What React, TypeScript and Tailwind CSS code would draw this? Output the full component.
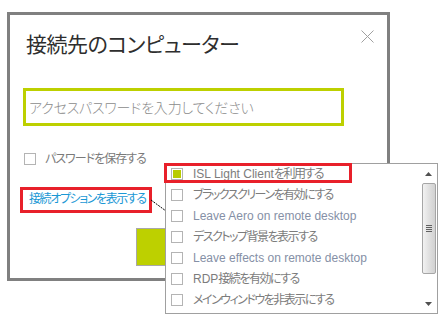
import React from "react";

const FONT = "[font-family:'Liberation_Sans','Noto_Sans_CJK_JP',sans-serif]";

function Check({ checked }: { checked?: boolean }) {
  return (
    <div className="w-[12px] h-[12px] border border-[#b4b4b4] bg-white flex items-center justify-center shrink-0">
      {checked && <div className="w-[8px] h-[8px] bg-[#b8cc00]" />}
    </div>
  );
}

function Mixed({ text }: { text: string }) {
  const parts = text.split(/([A-Za-z0-9 ]+)/).filter((p) => p.length > 0);
  return (
    <>
      {parts.map((p, i) =>
        /^[A-Za-z0-9 ]+$/.test(p) ? (
          <span key={i}>{p}</span>
        ) : (
          <span key={i} className="tracking-[-1.5px]">
            {p}
          </span>
        )
      )}
    </>
  );
}

const items: { text: string; en?: boolean; checked?: boolean }[] = [
  { text: "ISL Light Clientを利用する", checked: true },
  { text: "ブラックスクリーンを有効にする" },
  { text: "Leave Aero on remote desktop", en: true },
  { text: "デスクトップ背景を表示する" },
  { text: "Leave effects on remote desktop", en: true },
  { text: "RDP接続を有効にする" },
  { text: "メインウィンドウを非表示にする" },
];

export default function App() {
  return (
    <div className={`relative w-[443px] h-[322px] bg-white overflow-hidden ${FONT} [font-feature-settings:'palt']`}>
      <div className="pt-[12px] pl-[7px]">
        <div className="relative w-[383px] h-[269px] border-[3px] border-[#808080] bg-white">
          <div className="pl-[16px] pt-[14px]">
            <div className="text-[21px] leading-[28px] text-[#2e2e2e] [font-family:'Noto_Sans_CJK_JP',sans-serif] tracking-[-0.5px]">
              接続先のコンピューター
            </div>
            <div className="mt-[31px] -ml-[3px] w-[321px] h-[38px] border-[3px] border-[#bdd000] flex items-center pl-[3px]">
              <span className="text-[14px] tracking-[-0.2px] text-[#8c8c8c] font-light [font-family:'Noto_Sans_CJK_JP',sans-serif]">
                アクセスパスワードを入力してください
              </span>
            </div>
            <div className="mt-[26px] -ml-[2px] flex items-center gap-[9px] h-[14px]">
              <Check />
              <span className="text-[12px] tracking-[-1px] text-[#7a7a7a]">パスワードを保存する</span>
            </div>
            <div className="mt-[25px] ml-[3px] text-[12px] leading-[16px] tracking-[-1.4px] text-[#1a98d5] whitespace-nowrap">
              接続オプションを表示する
            </div>
            <div className="mt-[21px] ml-[110px] w-[90px] h-[38px] bg-[#bdd000] border border-[#a8a8a8]" />
          </div>
          <svg className="absolute left-[351px] top-[15px]" width="13" height="13" viewBox="0 0 13 13">
            <path d="M0.5 0.5 L12.5 12.5 M12.5 0.5 L0.5 12.5" stroke="#a0a0a0" strokeWidth="1" fill="none" />
          </svg>
        </div>
      </div>

      {/* highlight around link */}
      <div className="absolute left-[20px] top-[187px] w-[132px] h-[26px] border-[3px] border-[#e8202a]" />
      <svg className="absolute left-[150px] top-[199px]" width="18" height="14" viewBox="0 0 18 14">
        <path d="M1 1 L16 12" stroke="#000" strokeWidth="1" strokeDasharray="2 1" fill="none" />
      </svg>

      {/* dropdown */}
      <div className="absolute left-[165px] top-[163px] w-[273px] h-[151px] border border-[#a0a0a0] bg-white">
        <div className="-mt-[1px] pl-[5px]">
          {items.map((it, i) => (
            <div key={i} className="h-[21px] flex items-center gap-[10px]">
              <Check checked={it.checked} />
              <span
                className={
                  it.en
                    ? "text-[12px] text-[#8590a6] whitespace-nowrap"
                    : "text-[12px] text-[#7c7c7c] whitespace-nowrap"
                }
              >
                {it.en ? it.text : <Mixed text={it.text} />}
              </span>
            </div>
          ))}
        </div>
        {/* scrollbar */}
        <div className="absolute right-0 top-0 bottom-0 w-[17px] bg-white flex flex-col items-center">
          <div className="h-[19px] flex items-center justify-center">
            <svg width="7" height="4" viewBox="0 0 7 4">
              <path d="M0 4 L3.5 0 L7 4 Z" fill="#505050" />
            </svg>
          </div>
          <div className="w-[14px] h-[91px] rounded-[2px] border border-[#a6a6a6] bg-gradient-to-r from-[#f2f2f2] via-[#e0e0e0] to-[#d2d2d2] flex flex-col items-center justify-center gap-[1px]">
            <div className="w-[6px] h-[1px] bg-[#606060]" />
            <div className="w-[6px] h-[1px] bg-[#606060]" />
            <div className="w-[6px] h-[1px] bg-[#606060]" />
            <div className="w-[6px] h-[1px] bg-[#606060]" />
          </div>
          <div className="flex-1" />
          <div className="h-[19px] flex items-center justify-center">
            <svg width="7" height="4" viewBox="0 0 7 4">
              <path d="M0 0 L3.5 4 L7 0 Z" fill="#505050" />
            </svg>
          </div>
        </div>
      </div>

      {/* highlight around first item */}
      <div className="absolute left-[164px] top-[163px] w-[188px] h-[20px] border-[3px] border-[#e8202a]" />
    </div>
  );
}
